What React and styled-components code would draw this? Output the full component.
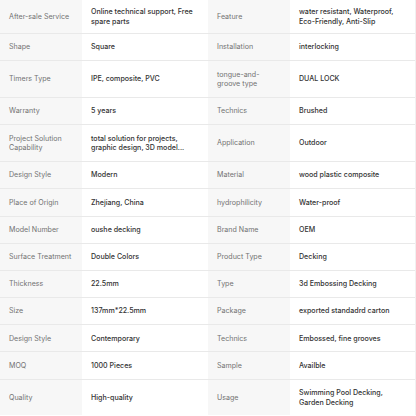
import React from 'react';
import styled, { createGlobalStyle } from 'styled-components';

const rows = [
  ['After-sale Service', 'Online technical support, Free spare parts', 'Feature', 'water resistant, Waterproof, Eco-Friendly, Anti-Slip'],
  ['Shape', 'Square', 'Installation', 'interlocking'],
  ['Timers Type', 'IPE, composite, PVC', 'tongue-and-groove type', 'DUAL LOCK'],
  ['Warranty', '5 years', 'Technics', 'Brushed'],
  ['Project Solution Capability', 'total solution for projects, graphic design, 3D model...', 'Application', 'Outdoor'],
  ['Design Style', 'Modern', 'Material', 'wood plastic composite'],
  ['Place of Origin', 'Zhejiang, China', 'hydrophilicity', 'Water-proof'],
  ['Model Number', 'oushe decking', 'Brand Name', 'OEM'],
  ['Surface Treatment', 'Double Colors', 'Product Type', 'Decking'],
  ['Thickness', '22.5mm', 'Type', '3d Embossing Decking'],
  ['Size', '137mm*22.5mm', 'Package', 'exported standadrd carton'],
  ['Design Style', 'Contemporary', 'Technics', 'Embossed, fine grooves'],
  ['MOQ', '1000 Pieces', 'Sample', 'Availble'],
  ['Quality', 'High-quality', 'Usage', 'Swimming Pool Decking, Garden Decking'],
];

const GlobalStyle = createGlobalStyle`
  body {
    margin: 0;
    background: #fff;
    font-family: Inter, "Noto Sans", sans-serif;
  }
`;

const Table = styled.div`
  width: 415px;
  border-right: 1px solid #f1f1f1;
`;

const Row = styled.div`
  display: grid;
  grid-template-columns: 82px 126px 82px 1fr;
  border-bottom: 1px solid #e9e9e9;

  &:first-child > div {
    padding-top: 7px;
    padding-bottom: 7px;
  }

  &:last-child {
    border-bottom: none;
  }
`;

const Cell = styled.div`
  display: flex;
  align-items: center;
  padding: 8.3px 10px 8.3px 9px;
  box-sizing: border-box;
  font-size: 7.1px;
  line-height: 9.6px;
  background: ${(p) => (p.$label ? '#f7f7f7' : '#fff')};
  color: ${(p) => (p.$label ? '#727272' : '#333')};
  font-weight: ${(p) => (p.$label ? 400 : 500)};
`;

const App = () => (
  <>
    <GlobalStyle />
    <Table>
      {rows.map((r, i) => (
        <Row key={i}>
          <Cell $label>{r[0]}</Cell>
          <Cell>{r[1]}</Cell>
          <Cell $label>{r[2]}</Cell>
          <Cell>{r[3]}</Cell>
        </Row>
      ))}
    </Table>
  </>
);

export default App;
